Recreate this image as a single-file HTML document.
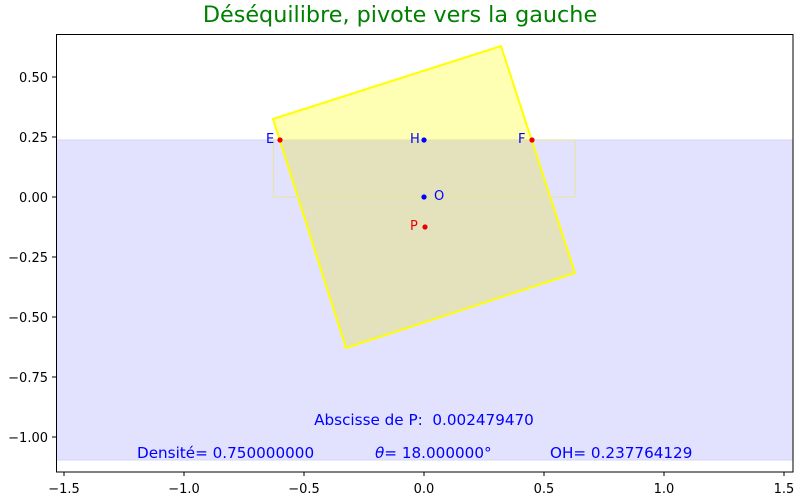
<!DOCTYPE html>
<html><head><meta charset="utf-8"><style>html,body{margin:0;padding:0;background:#fff}svg{display:block}</style></head>
<body>
<svg width="800" height="500" xmlns="http://www.w3.org/2000/svg" font-family="DejaVu Sans, Liberation Sans, sans-serif">
<defs><clipPath id="pc"><polygon points="273,119 501,46 575,273 346,348"/></clipPath></defs>
<rect width="800" height="500" fill="#fff"/>
<text x="400" y="22" text-anchor="middle" font-size="22.3" fill="#008000">Déséquilibre, pivote vers la gauche</text>
<rect x="56.5" y="140" width="736.5" height="320" fill="#e2e2ff" stroke="#d4d4f4" stroke-width="1"/>
<polygon points="273,119 501,46 575,273 346,348" fill="#ffffb3"/>
<rect x="56" y="140" width="737" height="320" fill="#e4e2bc" clip-path="url(#pc)"/>
<polygon points="273,119 501,46 575,273 346,348" fill="none" stroke="#ffff00" stroke-width="2"/>
<rect x="273.5" y="140" width="301.5" height="57" fill="none" stroke="#e6e4a8" stroke-width="1.2"/>
<rect x="56.5" y="34.5" width="736.5" height="437.5" fill="none" stroke="#000" stroke-width="1"/>
<g fill="#00f" font-size="13">
<circle cx="424" cy="140" r="2.6"/><circle cx="424" cy="197" r="2.6"/>
<text x="410" y="143">H</text><text x="434" y="200">O</text>
<text x="266" y="143">E</text><text x="518" y="143">F</text>
</g>
<g fill="#e00">
<circle cx="280" cy="140" r="2.6"/><circle cx="532" cy="140" r="2.6"/><circle cx="425" cy="227" r="2.6"/>
<text x="410" y="230" font-size="13">P</text>
</g>
<g fill="#00f" font-size="15.2" style="white-space:pre">
<text x="424" y="425" text-anchor="middle" style="white-space:pre">Abscisse de P:  0.002479470</text>
<text x="137" y="458">Densité= 0.750000000</text>
<text x="375" y="458"><tspan font-style="italic">θ</tspan>= 18.000000°</text>
<text x="550" y="458">OH= 0.237764129</text>
</g>
<g stroke="#000" stroke-width="1">
<line x1="64" y1="472" x2="64" y2="476"/><line x1="184" y1="472" x2="184" y2="476"/><line x1="304" y1="472" x2="304" y2="476"/><line x1="424" y1="472" x2="424" y2="476"/><line x1="544" y1="472" x2="544" y2="476"/><line x1="664" y1="472" x2="664" y2="476"/><line x1="784" y1="472" x2="784" y2="476"/>
<line x1="52" y1="77" x2="56" y2="77"/><line x1="52" y1="137" x2="56" y2="137"/><line x1="52" y1="197" x2="56" y2="197"/><line x1="52" y1="257" x2="56" y2="257"/><line x1="52" y1="317" x2="56" y2="317"/><line x1="52" y1="377" x2="56" y2="377"/><line x1="52" y1="437" x2="56" y2="437"/>
</g>
<g font-size="13" fill="#000" text-anchor="middle">
<text x="64" y="493">−1.5</text><text x="184" y="493">−1.0</text><text x="304" y="493">−0.5</text><text x="424" y="493">0.0</text><text x="544" y="493">0.5</text><text x="664" y="493">1.0</text><text x="784" y="493">1.5</text>
</g>
<g font-size="13" fill="#000" text-anchor="end">
<text x="48" y="82">0.50</text><text x="48" y="142">0.25</text><text x="48" y="202">0.00</text><text x="48" y="262">−0.25</text><text x="48" y="322">−0.50</text><text x="48" y="382">−0.75</text><text x="48" y="442">−1.00</text>
</g>
</svg>
</body></html>
